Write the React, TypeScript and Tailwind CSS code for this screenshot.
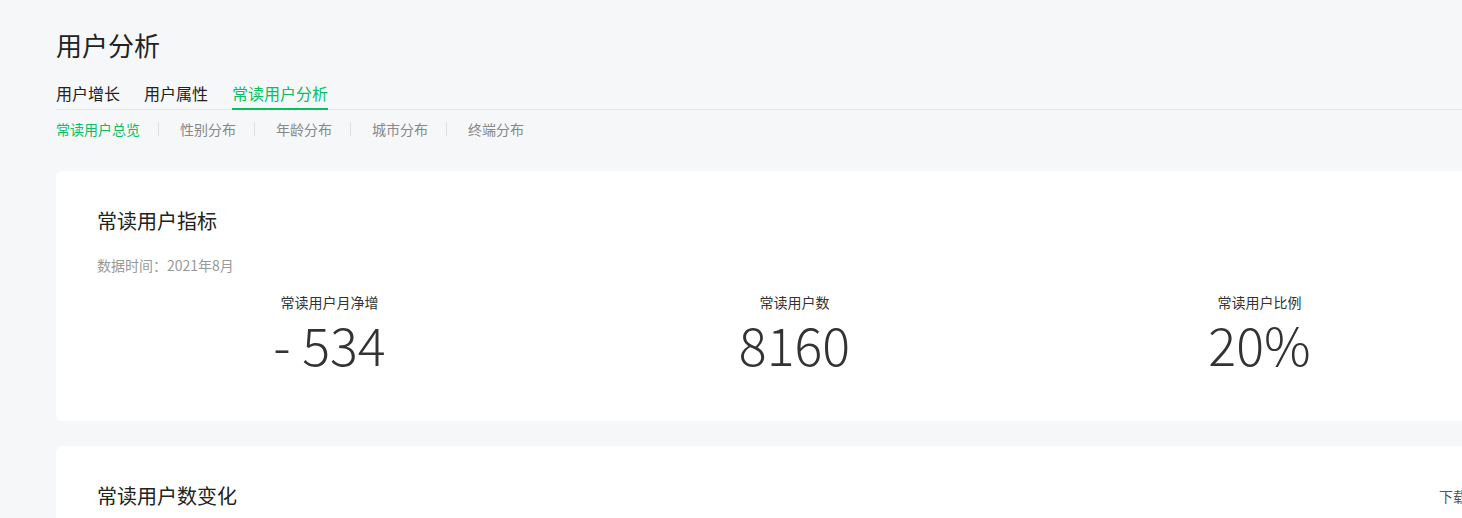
import React from "react";

const font = { fontFamily: '"Noto Sans CJK SC", "Noto Sans", sans-serif' };

export default function App() {
  const subs = ["常读用户总览", "性别分布", "年龄分布", "城市分布", "终端分布"];
  const metrics = [
    { label: "常读用户月净增", value: "- 534" },
    { label: "常读用户数", value: "8160" },
    { label: "常读用户比例", value: "20%" },
  ];
  return (
    <div className="w-[1600px] min-h-[518px] bg-[#f6f7f9] pl-[56px] pt-[26px] text-[#1a1a1a]" style={font}>
      <h1 className="text-[26px] leading-[38px] font-normal text-[#222]">用户分析</h1>
      <div className="mt-[17px] flex gap-[24px] border-b border-[#e4e6e9] text-[16px]">
        <div className="pb-[4px] leading-[24px] text-[#222]">用户增长</div>
        <div className="pb-[4px] leading-[24px] text-[#222]">用户属性</div>
        <div className="-mb-px border-b-2 border-[#07c160] pb-[3px] leading-[24px] text-[#07c160]">常读用户分析</div>
      </div>
      <div className="mt-[9px] flex items-center text-[14px] leading-[20px]">
        {subs.map((s, i) => (
          <React.Fragment key={s}>
            {i > 0 && <span className="ml-[18px] mr-[21px] h-[14px] w-px bg-[#dcdfe3]" />}
            <span className={i === 0 ? "text-[#07c160]" : "text-[#888]"}>{s}</span>
          </React.Fragment>
        ))}
      </div>
      <div className="mt-[32px] w-[1477px] rounded-[6px] bg-white px-[41px] pt-[36px] pb-[45px]">
        <h2 className="text-[20px] leading-[28px] font-normal text-[#222]">常读用户指标</h2>
        <div className="mt-[20px] text-[14px] leading-[20px] text-[#999]">数据时间：2021年8月</div>
        <div className="mt-[17px] grid grid-cols-3">
          {metrics.map((m) => (
            <div key={m.label} className="flex flex-col items-center">
              <div className="text-[14px] leading-[20px] text-[#333]">{m.label}</div>
              <div className="text-[52px] leading-[64px] font-light text-[#333] whitespace-pre">{m.value}</div>
            </div>
          ))}
        </div>
      </div>
      <div className="mt-[25px] flex w-[1477px] items-start justify-between rounded-[6px] bg-white px-[41px] pt-[36px] pb-[40px]">
        <h2 className="text-[20px] leading-[28px] font-normal text-[#222]">常读用户数变化</h2>
        <span className="mt-[4px] -mr-[3px] text-[14px] leading-[20px] text-[#555]">下载数据</span>
      </div>
    </div>
  );
}
